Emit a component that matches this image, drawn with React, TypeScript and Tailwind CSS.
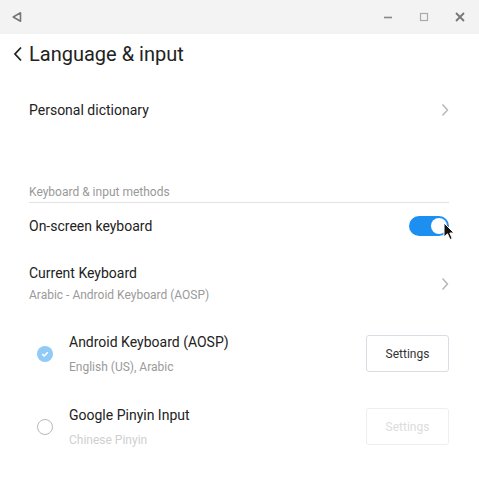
import React from "react";

const Chevron = () => (
  <svg width="8" height="14" viewBox="0 0 8 14" fill="none">
    <path d="M1.5 1.5 L6.5 7 L1.5 12.5" stroke="#b5b5b5" strokeWidth="1.4" />
  </svg>
);

export default function App() {
  return (
    <div className="w-[479px] h-[484px] bg-white relative overflow-hidden" style={{ fontFamily: "Roboto, 'Noto Sans', sans-serif" }}>
      {/* title bar */}
      <div className="h-[34px] bg-[#f3f3f3] flex items-center pl-[11px] pr-[13px]">
        <svg width="12" height="12" viewBox="0 0 12 12" fill="none">
          <path d="M9.5 1.8 L9.5 10.2 L2.2 6 Z" stroke="#777" strokeWidth="1.6" strokeLinejoin="round" />
        </svg>
        <div className="flex-1" />
        <div className="flex items-center gap-[24px]">
          <svg width="12" height="12" viewBox="0 0 12 12"><path d="M2 6.5 H10" stroke="#888" strokeWidth="1.6" /></svg>
          <svg width="12" height="12" viewBox="0 0 12 12" fill="none"><rect x="2.5" y="2.5" width="7" height="7" stroke="#aaa" strokeWidth="1.2" /></svg>
          <svg width="12" height="12" viewBox="0 0 12 12"><path d="M2 2 L10 10 M10 2 L2 10" stroke="#777" strokeWidth="1.8" /></svg>
        </div>
      </div>

      {/* header */}
      <div className="h-[40px] flex items-center pl-[13px]">
        <svg width="10" height="16" viewBox="0 0 10 16" fill="none">
          <path d="M8 1.5 L2 8 L8 14.5" stroke="#222" strokeWidth="1.8" />
        </svg>
        <span className="ml-[6px] text-[20px] text-[#222] leading-none">Language &amp; input</span>
      </div>

      <div className="pl-[29px] pr-[30px]">
        {/* Personal dictionary */}
        <div className="h-[72px] flex items-center justify-between">
          <span className="text-[14px] text-[#222]">Personal dictionary</span>
          <Chevron />
        </div>

        <div className="h-[35px]" />

        {/* section header */}
        <div className="h-[22px] flex items-end pb-[4px] border-b border-[#e3e3e3]">
          <span className="text-[12px] text-[#999] leading-none">Keyboard &amp; input methods</span>
        </div>

        {/* on-screen keyboard */}
        <div className="h-[46px] flex items-center justify-between">
          <span className="text-[14px] text-[#222]">On-screen keyboard</span>
          <div className="w-[40px] h-[20px] rounded-full bg-[#1d8ff0] flex items-center justify-end pr-[2px]">
            <div className="w-[16px] h-[16px] rounded-full bg-white" />
          </div>
        </div>

        {/* current keyboard */}
        <div className="h-[69px] flex items-center justify-between">
          <div className="flex flex-col gap-[7px]">
            <span className="text-[14px] text-[#222] leading-[16px]">Current Keyboard</span>
            <span className="text-[12px] text-[#9a9a9a] leading-[14px]">Arabic - Android Keyboard (AOSP)</span>
          </div>
          <Chevron />
        </div>

        {/* Android keyboard */}
        <div className="h-[71px] flex items-center">
          <div className="w-[40px] flex items-center pl-[8px]">
            <div className="w-[16px] h-[16px] rounded-full bg-[#90cbf8] flex items-center justify-center">
              <svg width="10" height="10" viewBox="0 0 10 10" fill="none"><path d="M2.2 5.2 L4.2 7 L7.8 3.2" stroke="white" strokeWidth="1.6" /></svg>
            </div>
          </div>
          <div className="flex flex-col gap-[10px] flex-1">
            <span className="text-[14px] text-[#222] leading-[16px]">Android Keyboard (AOSP)</span>
            <span className="text-[12px] text-[#9a9a9a] leading-[14px]">English (US), Arabic</span>
          </div>
          <div className="w-[83px] h-[37px] border border-[#d9dde3] rounded-[3px] flex items-center justify-center text-[12px] text-[#333]">Settings</div>
        </div>

        {/* Google Pinyin */}
        <div className="h-[75px] flex items-center">
          <div className="w-[40px] flex items-center pl-[8px]">
            <div className="w-[16px] h-[16px] rounded-full border border-[#b8b8b8]" />
          </div>
          <div className="flex flex-col gap-[10px] flex-1">
            <span className="text-[14px] text-[#222] leading-[16px]">Google Pinyin Input</span>
            <span className="text-[12px] text-[#cfcfcf] leading-[14px]">Chinese Pinyin</span>
          </div>
          <div className="w-[83px] h-[37px] border border-[#eeeeee] rounded-[3px] flex items-center justify-center text-[12px] text-[#dcdcdc]">Settings</div>
        </div>
      </div>

      {/* mouse cursor */}
      <svg className="absolute left-[443px] top-[222px]" width="12" height="19" viewBox="0 0 12 19">
        <path d="M1 1 L1 15 L4.5 11.8 L7 17.5 L9.2 16.5 L6.8 11 L11 11 Z" fill="#111" stroke="white" strokeWidth="1" strokeLinejoin="round" />
      </svg>
    </div>
  );
}
